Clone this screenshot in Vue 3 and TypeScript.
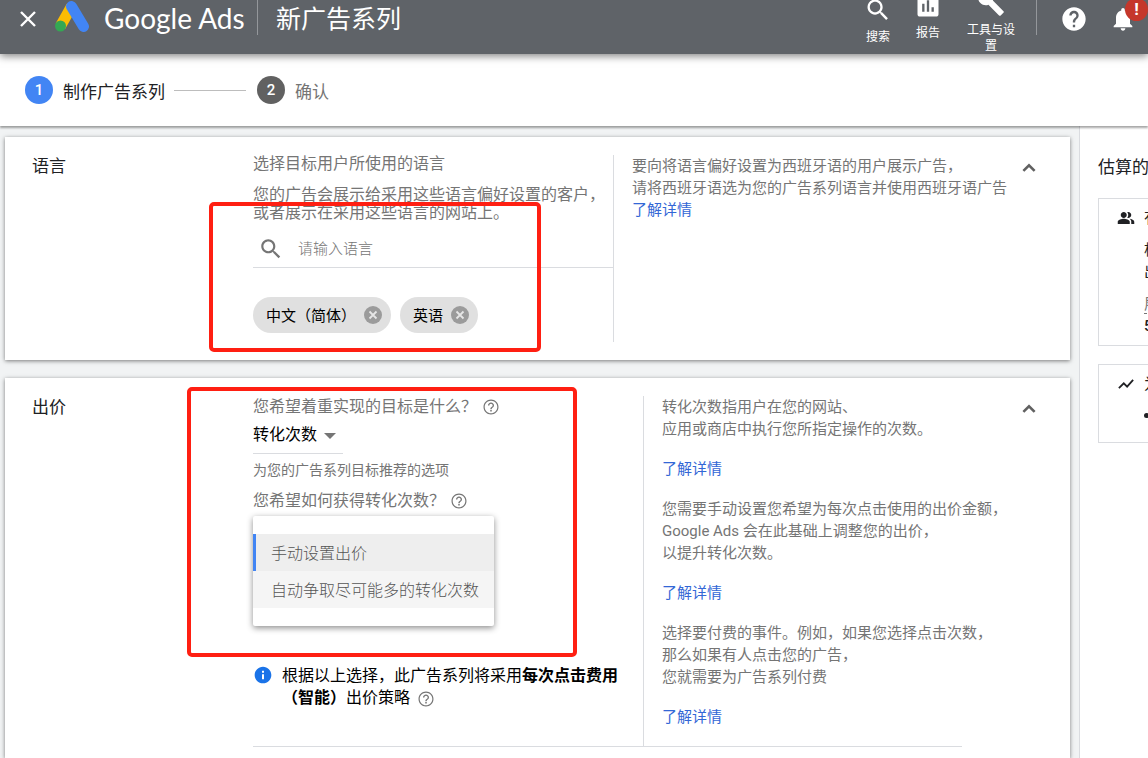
<script setup lang="ts">
import { ref } from 'vue'

interface HelpBlock {
  lines: string[]
}

const goal = ref('转化次数')
const query = ref('')
const languages = ref<string[]>(['中文（简体）', '英语'])
const strategies: string[] = ['手动设置出价', '自动争取尽可能多的转化次数']
const selected = ref(0)

const languageHelp: string[] = ['要向将语言偏好设置为西班牙语的用户展示广告，', '请将西班牙语选为您的广告系列语言并使用西班牙语广告']
const bidHelp: HelpBlock[] = [
  { lines: ['转化次数指用户在您的网站、', '应用或商店中执行您所指定操作的次数。'] },
  { lines: ['您需要手动设置您希望为每次点击使用的出价金额，', 'Google Ads 会在此基础上调整您的出价，', '以提升转化次数。'] },
  { lines: ['选择要付费的事件。例如，如果您选择点击次数，', '那么如果有人点击您的广告，', '您就需要为广告系列付费'] },
]

const helpPath =
  'M11 18h2v-2h-2v2zm1-16C6.48 2 2 6.48 2 12s4.48 10 10 10 10-4.48 10-10S17.52 2 12 2zm0 18.4c-4.63 0-8.4-3.77-8.4-8.4S7.37 3.6 12 3.6s8.4 3.77 8.4 8.4-3.77 8.4-8.4 8.4zM12 6c-2.21 0-4 1.79-4 4h1.8c0-1.2 1-2.2 2.2-2.2s2.2 1 2.2 2.2c0 2-3.1 1.75-3.1 5h1.8c0-2.25 3.1-2.5 3.1-5 0-2.21-1.79-4-4-4z'
const searchPath =
  'M15.5 14h-.79l-.28-.27C15.41 12.59 16 11.11 16 9.5 16 5.91 13.09 3 9.5 3S3 5.91 3 9.5 5.91 16 9.5 16c1.61 0 3.09-.59 4.23-1.57l.27.28v.79l5 4.99L20.49 19l-4.99-5zm-6 0C7.01 14 5 11.99 5 9.5S7.01 5 9.5 5 14 7.01 14 9.5 11.99 14 9.5 14z'

function removeLanguage(name: string): void {
  languages.value = languages.value.filter((l) => l !== name)
}
</script>

<template>
  <div class="page">
    <header class="topbar">
      <button class="close" type="button" aria-label="关闭">
        <svg viewBox="0 0 16 16" width="16" height="16"><path d="M1 1l14 14M15 1L1 15" stroke="#fff" stroke-width="2.4" /></svg>
      </button>
      <svg class="logo" viewBox="0 0 34 31" width="34" height="31" aria-hidden="true">
        <path d="M16.500 5.500L5.500 25" stroke="#fbbc04" stroke-width="11" />
        <path d="M16.500 5.500L28.500 25.500" stroke="#4285f4" stroke-width="11" stroke-linecap="round" />
        <circle cx="5.500" cy="25" r="5.500" fill="#34a853" />
      </svg>
      <span class="brand">Google Ads</span>
      <span class="rule"></span>
      <h1>新广告系列</h1>
      <nav class="tools">
        <button class="tool search" type="button">
          <svg viewBox="0 0 24 24" width="28" height="28"><path :d="searchPath" /></svg>
          <span>搜索</span>
        </button>
        <button class="tool report" type="button">
          <svg viewBox="0 0 24 24" width="28" height="28"><path d="M19 3H5c-1.100 0-2 .9-2 2v14c0 1.100.9 2 2 2h14c1.100 0 2-.9 2-2V5c0-1.100-.9-2-2-2zM9 17H7v-7h2v7zm4 0h-2V7h2v10zm4 0h-2v-4h2v4z" /></svg>
          <span>报告</span>
        </button>
        <button class="tool setup" type="button">
          <svg viewBox="0 0 24 24" width="28" height="28"><path d="M22.700 19l-9.100-9.100c.9-2.300.4-5-1.500-6.900-2-2-5-2.400-7.400-1.300L9 6 6 9 1.600 4.700C.4 7.100.9 10.100 2.900 12.100c1.900 1.900 4.600 2.400 6.900 1.500l9.100 9.100c.4.4 1 .4 1.400 0l2.300-2.300c.5-.4.5-1.100.1-1.400z" /></svg>
          <span>工具与设置</span>
        </button>
      </nav>
      <span class="rule"></span>
      <button class="round" type="button" aria-label="帮助">
        <svg viewBox="0 0 24 24" width="28" height="28"><path d="M12 2C6.480 2 2 6.480 2 12s4.480 10 10 10 10-4.480 10-10S17.520 2 12 2zm1 17h-2v-2h2v2zm2.070-7.750l-.9.920C13.450 12.900 13 13.500 13 15h-2v-.5c0-1.100.45-2.100 1.170-2.830l1.240-1.260c.37-.36.59-.86.59-1.410 0-1.100-.9-2-2-2s-2 .9-2 2H8c0-2.210 1.790-4 4-4s4 1.790 4 4c0 .88-.36 1.680-.93 2.250z" /></svg>
      </button>
      <button class="round bell" type="button" aria-label="通知">
        <svg viewBox="0 0 24 24" width="28" height="28"><path d="M12 22c1.100 0 2-.9 2-2h-4c0 1.100.9 2 2 2zm6-6v-5c0-3.070-1.640-5.640-4.500-6.320V4c0-.83-.67-1.500-1.500-1.500s-1.500.67-1.500 1.500v.68C7.630 5.360 6 7.920 6 11v5l-2 2v1h16v-1l-2-2z" /></svg>
        <span class="alert">!</span>
      </button>
    </header>

    <ol class="steps">
      <li class="step current"><span class="num">1</span>制作广告系列</li>
      <li class="track" aria-hidden="true"></li>
      <li class="step"><span class="num">2</span>确认</li>
    </ol>

    <div class="layout">
      <main>
        <section class="card">
          <h2>语言</h2>
          <div class="body">
            <div class="fields languages">
              <p class="lead">选择目标用户所使用的语言</p>
              <p class="desc">您的广告会展示给采用这些语言偏好设置的客户，<br />或者展示在采用这些语言的网站上。</p>
              <label class="finder">
                <svg viewBox="0 0 24 24" width="26" height="26"><path :d="searchPath" /></svg>
                <input v-model="query" type="text" placeholder="请输入语言" aria-label="请输入语言" />
              </label>
              <ul class="chips">
                <li v-for="name in languages" :key="name">
                  <span>{{ name }}</span>
                  <button type="button" :aria-label="'移除' + name" @click="removeLanguage(name)">
                    <svg viewBox="0 0 18 18" width="18" height="18"><circle cx="9" cy="9" r="9" fill="#9b9b9b" /><path d="M5.500 5.500l7 7M12.500 5.500l-7 7" stroke="#e6e6e6" stroke-width="1.800" /></svg>
                  </button>
                </li>
              </ul>
            </div>
            <div class="help">
              <p><template v-for="line in languageHelp" :key="line">{{ line }}<br /></template><a href="#">了解详情</a></p>
            </div>
          </div>
          <div class="side">
            <button type="button" aria-label="收起语言"><svg viewBox="0 0 24 24" width="26" height="26"><path d="M6.800 14.700L12 9.500l5.200 5.200" fill="none" stroke="currentColor" stroke-width="2.400" /></svg></button>
          </div>
          <div class="mark mark-language"></div>
        </section>

        <section class="card last">
          <h2>出价</h2>
          <div class="body lined">
            <div class="fields bidding">
              <p class="question">
                <label for="goal">您希望着重实现的目标是什么？</label>
                <svg viewBox="0 0 24 24" width="18" height="18"><path :d="helpPath" /></svg>
              </p>
              <div class="picker">
                <select id="goal" v-model="goal"><option>转化次数</option></select>
                <span class="arrow"></span>
              </div>
              <p class="note">为您的广告系列目标推荐的选项</p>
              <p class="question second">
                <span id="how">您希望如何获得转化次数？</span>
                <svg viewBox="0 0 24 24" width="18" height="18"><path :d="helpPath" /></svg>
              </p>
              <div class="menu" role="listbox" aria-labelledby="how">
                <button v-for="(item, i) in strategies" :key="item" type="button" role="option" :aria-selected="i === selected" :class="{ active: i === selected }" @click="selected = i">{{ item }}</button>
              </div>
              <div class="summary">
                <svg viewBox="0 0 24 24" width="20" height="20"><path fill="#1a73e8" d="M12 2C6.480 2 2 6.480 2 12s4.480 10 10 10 10-4.480 10-10S17.520 2 12 2zm1.200 15h-2.400v-6h2.400v6zm0-7.800h-2.400V6.800h2.400v2.400z" /></svg>
                <p>
                  根据以上选择，此广告系列将采用<b>每次点击费用<br />（智能）</b>出价策略
                  <svg viewBox="0 0 24 24" width="18" height="18"><path :d="helpPath" /></svg>
                </p>
              </div>
            </div>
            <div class="help">
              <template v-for="block in bidHelp" :key="block.lines[0]">
                <p><template v-for="(line, i) in block.lines" :key="line"><br v-if="i > 0" />{{ line }}</template></p>
                <p><a href="#">了解详情</a></p>
              </template>
            </div>
          </div>
          <div class="side">
            <button type="button" aria-label="收起出价"><svg viewBox="0 0 24 24" width="26" height="26"><path d="M6.800 14.700L12 9.500l5.200 5.200" fill="none" stroke="currentColor" stroke-width="2.400" /></svg></button>
          </div>
          <div class="mark mark-bidding"></div>
        </section>
      </main>

      <aside class="estimates">
        <h2>估算的</h2>
        <div class="panel">
          <svg viewBox="0 0 24 24" width="18" height="18"><path d="M16.670 13.130C18.040 14.060 19 15.320 19 17v3h4v-3c0-2.180-3.570-3.470-6.330-3.870zM15 12c2.210 0 4-1.790 4-4s-1.790-4-4-4c-.47 0-.91.1-1.330.24C14.500 5.270 15 6.580 15 8s-.5 2.730-1.330 3.760c.42.14.86.24 1.330.24zM9 12c2.210 0 4-1.790 4-4s-1.790-4-4-4-4 1.790-4 4 1.790 4 4 4zm0 1c-2.670 0-8 1.340-8 4v3h16v-3c0-2.660-5.330-4-8-4z" /></svg>
          <div class="facts">
            <p>有</p>
            <p>根<br />出</p>
            <p><span class="term">展</span><br /><b>5</b></p>
          </div>
        </div>
        <div class="panel">
          <svg viewBox="0 0 24 24" width="18" height="18"><path d="M2.500 17.500l6.500-6.500 4.500 4.500L21.500 6.500" fill="none" stroke="currentColor" stroke-width="2.400" /></svg>
          <div class="facts">
            <p>为</p>
            <ul><li class="point"></li></ul>
          </div>
        </div>
      </aside>
    </div>
  </div>
</template>

<style>
body {
  margin: 0;
}
</style>

<style scoped>
.page {
  display: flex;
  flex-direction: column;
  min-height: 100vh;
  overflow: hidden;
  background: #f1f3f4;
  color: #202124;
  font-family: Roboto, "Noto Sans CJK SC", sans-serif;
  font-size: 16px;
}
h1, h2, p, ul, ol {
  margin: 0;
  padding: 0;
  list-style: none;
  font-weight: 400;
}
button {
  border: 0;
  padding: 0;
  background: none;
  font: inherit;
  color: inherit;
  cursor: pointer;
}
svg {
  display: block;
  flex: none;
  fill: currentColor;
}
a {
  color: #3367d6;
  text-decoration: none;
}

.topbar {
  position: relative;
  z-index: 2;
  display: flex;
  align-items: flex-start;
  height: 54px;
  padding-left: 20px;
  background: #5f6368;
  color: #fff;
  box-shadow: 0 2px 8px rgba(0, 0, 0, 0.5);
}
.close {
  margin-top: 11px;
}
.logo {
  margin: 1px 15px 0 19px;
}
.brand {
  width: 139px;
  font-family: Lato, sans-serif;
  font-size: 28px;
  line-height: 36px;
  white-space: nowrap;
}
.rule {
  flex: none;
  width: 1px;
  height: 35px;
  margin-left: 14px;
  background: #94979b;
}
h1 {
  margin-left: 18px;
  font-size: 25px;
  line-height: 40px;
}
.tools {
  display: flex;
  align-items: flex-start;
  margin-left: auto;
}
.tool {
  display: flex;
  flex-direction: column;
  align-items: center;
  gap: 5px;
  width: 50px;
  font-size: 12px;
  line-height: 16px;
}
.search {
  margin-top: -4px;
}
.report {
  margin-top: -8px;
}
.setup {
  width: 48px;
  margin: -11px 7px 0 14px;
}
.round {
  position: relative;
  margin: 5px 0 0 23px;
}
.bell {
  margin: 5px 11px 0 21px;
}
.alert {
  position: absolute;
  top: -7px;
  left: 16px;
  width: 23px;
  height: 23px;
  border-radius: 50%;
  background: #c5372b;
  font-size: 17px;
  font-weight: 700;
  line-height: 23px;
}

.steps {
  position: relative;
  z-index: 1;
  display: flex;
  align-items: center;
  height: 72px;
  padding-left: 25px;
  background: #fff;
  box-shadow: 0 2px 2px rgba(0, 0, 0, 0.35);
}
.step {
  display: flex;
  align-items: center;
  gap: 10px;
  color: #757575;
  font-size: 17px;
}
.current {
  color: #202124;
}
.num {
  width: 28px;
  height: 28px;
  border-radius: 50%;
  background: #616161;
  color: #fff;
  font-size: 15px;
  font-weight: 500;
  line-height: 28px;
  text-align: center;
}
.current .num {
  background: #4285f4;
}
.track {
  width: 72px;
  height: 1px;
  margin: 0 11px 0 9px;
  background: #bdbdbd;
}

.layout {
  display: flex;
  flex: 1;
}
main {
  display: flex;
  flex: 1;
  flex-direction: column;
  gap: 18px;
  min-width: 0;
  padding: 11px 9px 0 5px;
}
.card {
  position: relative;
  display: flex;
  padding: 18px 0 18px 27px;
  background: #fff;
  box-shadow: 0 1px 4px rgba(0, 0, 0, 0.5);
}
.last {
  flex: 1;
  align-items: flex-start;
  padding-bottom: 0;
}
h2 {
  font-size: 17px;
  line-height: 22px;
}
.card h2 {
  flex: none;
  width: 221px;
}
.body {
  display: flex;
  flex: 1;
  min-width: 0;
}
.lined {
  border-bottom: 1px solid #dadce0;
}
.fields {
  flex: none;
  border-right: 1px solid #dadce0;
  color: #757575;
  font-weight: 300;
  white-space: nowrap;
}
.languages {
  width: 360px;
}
.bidding {
  width: 390px;
}
.lead, .desc {
  line-height: 18px;
}
.desc {
  margin-top: 13px;
}
.finder {
  display: flex;
  align-items: center;
  gap: 14px;
  height: 37px;
  margin-top: 8px;
  padding-left: 5px;
  border-bottom: 1px solid #dadce0;
}
.finder input {
  flex: 1;
  min-width: 0;
  border: 0;
  padding: 0;
  outline: 0;
  background: none;
  font: inherit;
  font-size: 15px;
}
.finder input::placeholder {
  color: #757575;
}
.chips {
  display: flex;
  gap: 9px;
  margin: 29px 0 9px;
}
.chips li {
  display: flex;
  align-items: center;
  gap: 8px;
  height: 36px;
  padding: 0 9px 0 13px;
  border-radius: 18px;
  background: #e0e0e0;
  color: #000;
  font-size: 15px;
  font-weight: 400;
}
.chips span {
  padding-bottom: 2px;
}
.help {
  flex: 1;
  min-width: 0;
  padding-left: 18px;
  color: #757575;
  font-size: 15px;
  font-weight: 300;
  line-height: 22px;
  white-space: nowrap;
}
.help a {
  font-weight: 400;
}
.lined .help p {
  margin-bottom: 18px;
}
.side {
  display: flex;
  flex: none;
  align-items: flex-start;
  justify-content: flex-end;
  width: 80px;
  padding-right: 28px;
  color: #616161;
}
.question {
  display: flex;
  align-items: center;
  gap: 5px;
  line-height: 22px;
}
.second {
  margin-top: 11px;
}
.picker {
  display: flex;
  align-items: center;
  width: 90px;
  height: 35px;
  border-bottom: 1px solid #dadce0;
}
.picker select {
  width: 71px;
  border: 0;
  padding: 0 0 2px;
  outline: 0;
  appearance: none;
  background: none;
  color: #000;
  font: inherit;
  font-weight: 400;
}
.arrow {
  border: 6px solid transparent;
  border-top-color: #757575;
  border-bottom: 0;
}
.note {
  margin-top: 7px;
  font-size: 14px;
  line-height: 18px;
}
.menu {
  display: flex;
  flex-direction: column;
  width: 241px;
  margin-top: 4px;
  padding: 18px 0;
  border-radius: 2px;
  box-shadow: 0 2px 6px rgba(0, 0, 0, 0.45);
}
.menu button {
  height: 37px;
  padding: 0 0 2px 15px;
  border-left: 3px solid transparent;
  background: #f5f5f5;
  color: #555;
  text-align: left;
}
.menu .active {
  border-left-color: #4285f4;
  background: #eee;
}
.summary {
  display: flex;
  gap: 9px;
  margin-top: 39px;
  color: #000;
  font-weight: 400;
  line-height: 22px;
}
.summary p svg {
  display: inline-block;
  margin-left: 3px;
  vertical-align: middle;
  color: #757575;
}

.mark {
  position: absolute;
  box-sizing: border-box;
  border: 4px solid #ff1f12;
  border-radius: 5px;
  pointer-events: none;
}
.mark-language {
  top: 65px;
  left: 204px;
  width: 332px;
  height: 150px;
}
.mark-bidding {
  top: 9px;
  left: 182px;
  width: 390px;
  height: 270px;
}

.estimates {
  flex: none;
  box-sizing: border-box;
  width: 69px;
  padding: 30px 0 0 18px;
  overflow: hidden;
  border-left: 1px solid #dadce0;
  background: #fff;
  white-space: nowrap;
}
.panel {
  display: flex;
  gap: 9px;
  width: 260px;
  margin-top: 18px;
  padding: 8px 18px;
  border: 1px solid #dadce0;
  font-size: 15px;
  line-height: 22px;
}
.estimates h2 + .panel {
  margin-top: 20px;
}
.panel svg {
  margin-top: 2px;
}
.facts {
  display: flex;
  flex-direction: column;
  gap: 10px;
}
.term {
  border-bottom: 1px dashed #757575;
  color: #757575;
}
.facts b {
  font-weight: 500;
}
.point {
  width: 5px;
  height: 5px;
  margin: 8px 0 16px;
  border-radius: 50%;
  background: #202124;
}
</style>
